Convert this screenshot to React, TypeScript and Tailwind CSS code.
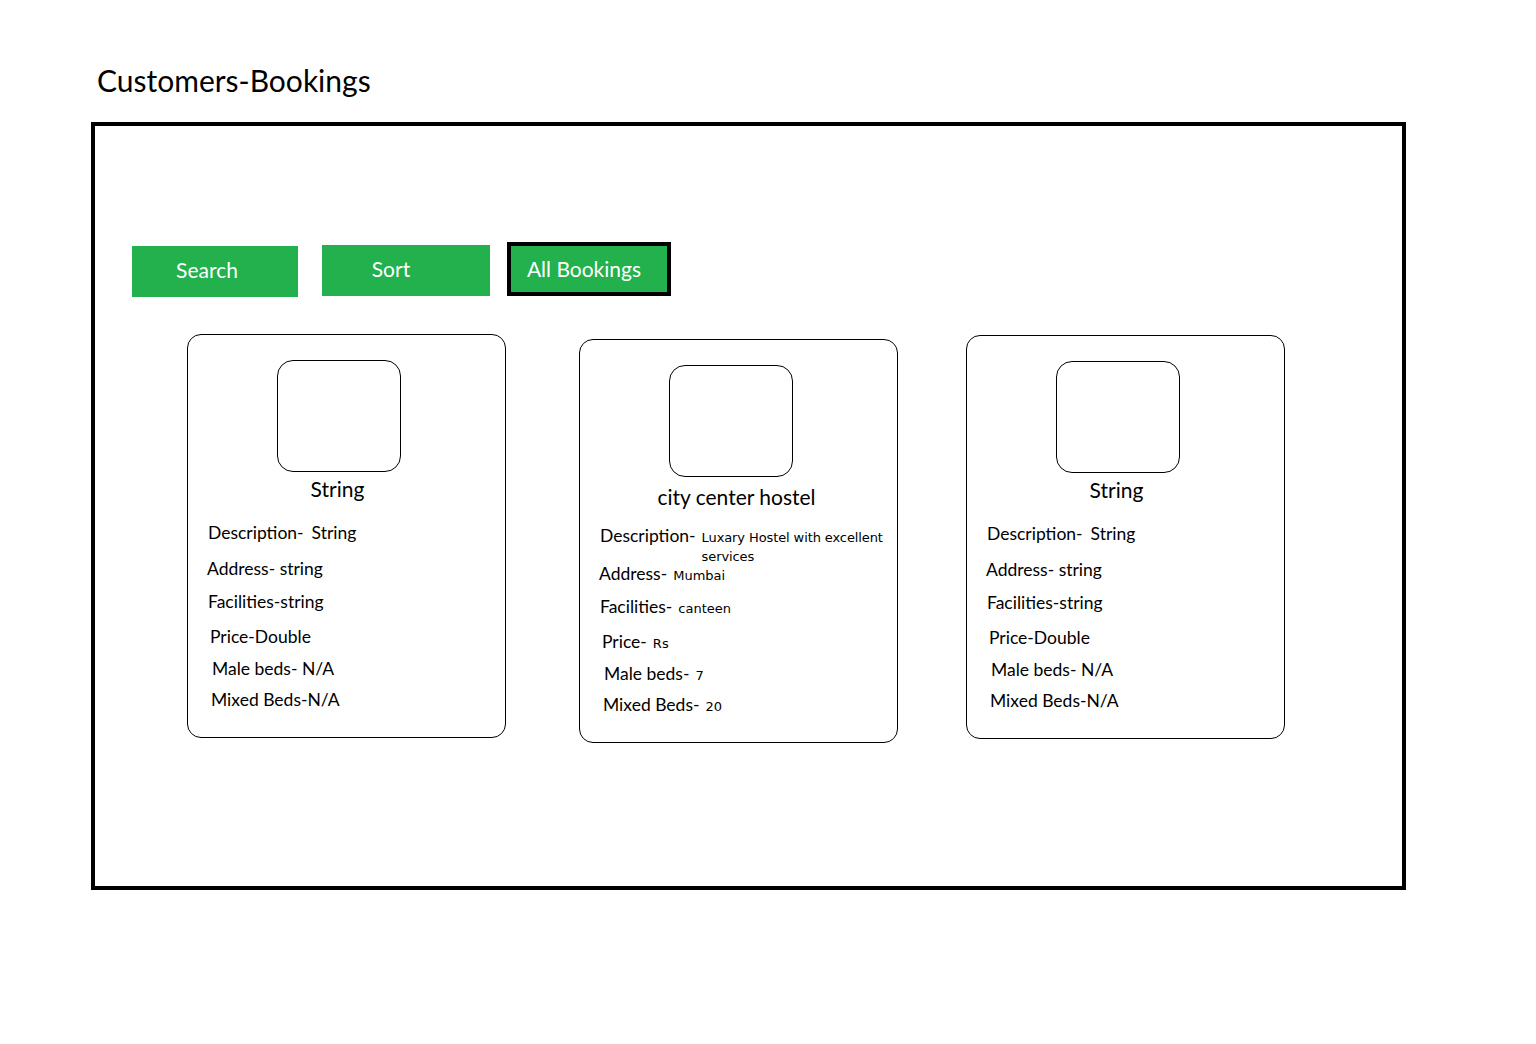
import React from 'react';

type Row = { label: string; value?: string; small?: boolean; pl: string; h: string };

type Card = {
  title: string;
  titleShift: string;
  offset: string;
  rows: Row[];
  descWrap?: boolean;
};

const sans = { fontFamily: 'Lato, "Open Sans", sans-serif' };
const small = { fontFamily: '"DejaVu Sans", Verdana, sans-serif' };

const plainRows = (desc: string): Row[] => [
  { label: 'Description-', value: desc, pl: 'pl-[20px]', h: 'h-[38px]' },
  { label: 'Address- string', pl: 'pl-[19px]', h: 'h-[33px]' },
  { label: 'Facilities-string', pl: 'pl-[20px]', h: 'h-[35px]' },
  { label: 'Price-Double', pl: 'pl-[22px]', h: 'h-[32px]' },
  { label: 'Male beds- N/A', pl: 'pl-[24px]', h: 'h-[31px]' },
  { label: 'Mixed Beds-N/A', pl: 'pl-[23px]', h: 'h-[24px]' },
];

const cards: Card[] = [
  { title: 'String', titleShift: 'pr-[18px]', offset: 'ml-[92px] mt-0', rows: plainRows('String') },
  {
    title: 'city center hostel',
    titleShift: 'pr-[4px] pt-[3px]',
    offset: 'ml-[73px] mt-[5px]',
    descWrap: true,
    rows: [
      { label: 'Description-', value: 'Luxary Hostel with excellent services', small: true, pl: 'pl-[20px]', h: 'h-[38px]' },
      { label: 'Address-', value: 'Mumbai', small: true, pl: 'pl-[19px]', h: 'h-[33px]' },
      { label: 'Facilities-', value: 'canteen', small: true, pl: 'pl-[20px]', h: 'h-[35px]' },
      { label: 'Price-', value: 'Rs', small: true, pl: 'pl-[22px]', h: 'h-[32px]' },
      { label: 'Male beds-', value: '7', small: true, pl: 'pl-[24px]', h: 'h-[31px]' },
      { label: 'Mixed Beds-', value: '20', small: true, pl: 'pl-[23px]', h: 'h-[24px]' },
    ],
  },
  { title: 'String', titleShift: 'pr-[18px]', offset: 'ml-[68px] mt-[1px]', rows: plainRows('String') },
];

function HostelCard({ card }: { card: Card }) {
  return (
    <div className={`${card.offset} w-[319px] h-[404px] shrink-0 border border-black rounded-[14px] bg-white`}>
      <div className="pt-[25px] pl-[89px]">
        <div className="w-[124px] h-[112px] border border-black rounded-[16px]" />
      </div>
      <div className={`${card.titleShift} mt-[5px] h-[24px] leading-[24px] text-[21px] text-black text-center`} style={sans}>
        {card.title}
      </div>
      <div className="mt-[18px]">
        {card.rows.map((row, i) => (
          <div key={i} className={`${row.pl} ${row.h} flex items-baseline text-[17.5px] leading-[24px] text-black`} style={sans}>
            <span className="shrink-0">{row.label}</span>
            {row.value && !row.small && <span className="ml-[8px] mt-[2px]">{row.value}</span>}
            {row.value && row.small && i === 0 && card.descWrap && (
              <span className="ml-[6px] w-[192px] text-[13px] leading-[19px] mt-[3px] tracking-[-0.1px]" style={small}>
                {row.value}
              </span>
            )}
            {row.value && row.small && !(i === 0 && card.descWrap) && (
              <span className="ml-[6px] text-[13px]" style={small}>
                {row.value}
              </span>
            )}
          </div>
        ))}
      </div>
    </div>
  );
}

export default function App() {
  return (
    <div className="w-full h-[1044px] bg-white overflow-hidden">
      <h1 className="pl-[97px] pt-[62px] text-[30px] leading-[36px] text-black font-normal" style={sans}>
        Customers-Bookings
      </h1>
      <div className="ml-[91px] mt-[24px] w-[1315px] h-[768px] border-4 border-black">
        <div className="pt-[116px] pl-[37px] flex items-start">
          <button className="mt-[4px] w-[166px] h-[51px] pr-[16px] pb-[4px] bg-[#22b14c] text-white text-[21px]" style={sans}>
            Search
          </button>
          <button className="ml-[24px] mt-[3px] w-[168px] h-[51px] pr-[30px] pb-[4px] bg-[#22b14c] text-white text-[21px]" style={sans}>
            Sort
          </button>
          <button className="ml-[17px] w-[164px] h-[54px] pr-[10px] bg-[#22b14c] border-4 border-black text-white text-[21px]" style={sans}>
            All Bookings
          </button>
        </div>
        <div className="mt-[37px] flex items-start">
          {cards.map((c, i) => (
            <HostelCard key={i} card={c} />
          ))}
        </div>
      </div>
    </div>
  );
}
